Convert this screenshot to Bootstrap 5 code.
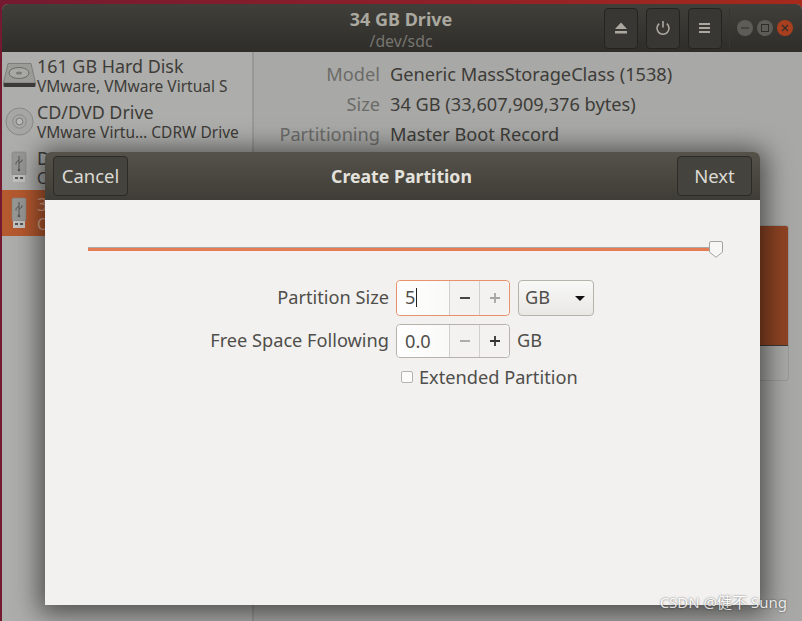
<!DOCTYPE html>
<html lang="en">
<head>
  <meta charset="UTF-8">
  <meta name="viewport" content="width=device-width, initial-scale=1.0">
  <title>Create Partition</title>
  <link rel="stylesheet" href="https://cdn.jsdelivr.net/npm/bootstrap@5.3.0/dist/css/bootstrap.min.css">
  <style>
    html, body { height: 100%; overflow: hidden; }
    body { font-family: "Noto Sans", "Noto Sans CJK SC", sans-serif; font-size: 18.2px; background: linear-gradient(90deg, #741a30 0%, #8c1f2a 50%, #a62a1c 100%); color: #3d3c38; }
    .desk { height: 621px; padding: 4px 0 0 2px; position: relative; }
    .app-win { height: 617px; border-radius: 6px 6px 0 0; overflow: hidden; display: flex; flex-direction: column; background: #a9a9a7; }
    .app-head { height: 48px; flex: none; background: linear-gradient(#413f3a, #2e2d29); display: flex; align-items: center; position: relative; padding-right: 9px; justify-content: flex-end; }
    .app-title { position: absolute; left: 0; right: 2px; top: 5px; text-align: center; line-height: 1.15; }
    .app-title b { display: block; font-size: 18px; font-weight: 700; color: #aaa89f; }
    .app-title span { font-size: 15.8px; color: #77756f; }
    .tool-btn { width: 34px; height: 41px; border: 1px solid #24231f; border-radius: 4px; background: #383733; display: flex; align-items: center; justify-content: center; margin-right: 8px; }
    .sep-v { width: 1px; height: 40px; background: #38372f; margin: 0 3px 0 -1px; }
    .wm-dot { width: 16px; height: 16px; border-radius: 50%; background: #5d5c57; margin-left: 4px; display: flex; align-items: center; justify-content: center; }
    .wm-dot.closer { background: #a8401f; }
    .app-body { flex: 1; display: flex; min-height: 0; }
    .side { width: 252px; flex: none; background: #adadab; border-right: 2px solid #989896; }
    .drive { height: 46px; display: flex; align-items: center; padding-left: 1px; gap: 1px; white-space: nowrap; overflow: hidden; }
    .drive.on { background: #b5592f; color: #d9a689; }
    .drive-ico { width: 33px; flex: none; display: flex; justify-content: center; }
    .drive-name { font-size: 17.9px; line-height: 22px; }
    .drive-sub { font-size: 15.5px; line-height: 19px; }
    .info { flex: 1; padding-top: 8px; position: relative; background: #a8a8a6; }
    .info-row { display: flex; height: 30px; align-items: center; white-space: nowrap; }
    .info-key { width: 126px; text-align: right; color: #6b6b68; margin-right: 10px; }
    .usage { position: absolute; left: 400px; top: 173px; height: 156px; right: 13px; border: 1px solid #989896; border-radius: 3px; overflow: hidden; }
    .usage div { height: 120px; background: #8f4423; border-bottom: 1px solid #3a3936; }
    .dlg { position: absolute; left: 45px; top: 152px; width: 715px; height: 453px; border-radius: 6px 6px 0 0; box-shadow: 0 3px 26px 6px rgba(0,0,0,.55); display: flex; flex-direction: column; }
    .dlg-head { height: 48px; flex: none; background: linear-gradient(#55524a, #3f3d37); border-radius: 6px 6px 0 0; display: flex; align-items: center; justify-content: space-between; padding: 0 8px; position: relative; }
    .dlg-head b { position: absolute; left: 0; right: 2px; text-align: center; font-size: 17.7px; color: #e4e2dc; }
    .dlg-btn { width: 75px; height: 40px; border: 1px solid #2c2b27; border-radius: 4px; background: #45433d; color: #dcdad4; font-size: 18.5px; display: flex; align-items: center; justify-content: center; }
    .dlg-body { flex: 1; background: #f2f1ef; padding-top: 40px; }
    .slide { margin: 0 37px 0 43px; height: 20px; position: relative; }
    .slide-fill { position: absolute; left: 0; right: 4px; top: 8px; height: 3px; background: #e57c52; box-shadow: 0 -1px 0 #a9a8a4; }
    .slide-knob { position: absolute; right: 0; top: 1px; }
    .part-form { display: grid; grid-template-columns: 344px auto 1fr; column-gap: 7px; row-gap: 8px; margin-top: 20px; align-items: center; color: #4f4e4a; }
    .part-form > label { text-align: right; margin: 0; }
    .spin { width: 114px; height: 36px; border: 1px solid #b6b3ac; border-radius: 4px; display: flex; background: #fff; }
    .spin.short-spin { height: 34px; }
    .spin.act { border-color: #e8926d; }
    .spin-val { flex: 1; padding-left: 8px; line-height: 32px; background: linear-gradient(90deg, #fff, #f9f9f8); border-radius: 4px 0 0 4px; }
    .spin-val i { display: inline-block; width: 1px; height: 19px; background: #222; vertical-align: -3px; margin-left: 1px; }
    .spin-b { width: 30px; border-left: 1px solid #d2d0ca; background: #f3f2f0; display: flex; align-items: center; justify-content: center; font-size: 0; }
    .dim-sign { opacity: .4; }
    .gb-sel { width: 76px; height: 36px; border: 1px solid #b6b3ac; border-radius: 4px; background: linear-gradient(#f8f8f7, #e9e8e5); display: flex; align-items: center; justify-content: space-between; padding: 0 8px 0 6px; margin-left: 1px; }
    .gb-arrow { width: 0; height: 0; border-left: 5px solid transparent; border-right: 5px solid transparent; border-top: 5px solid #111; }
    .ext-row { grid-column: 2 / 4; display: flex; align-items: center; gap: 6px; padding-left: 5px; line-height: 22px; }
    .ext-box { width: 12px; height: 12px; border: 1px solid #b6b3ac; border-radius: 2px; background: #fbfbfa; }
    .mark-text { position: absolute; right: 15px; top: 592px; font-size: 15px; line-height: 20px; color: #fff; opacity: .8; text-shadow: 0 0 2px rgba(0,0,0,.75); white-space: nowrap; }
  </style>
</head>
<body>
  <div class="desk">
    <div class="app-win">
      <div class="app-head">
        <div class="app-title"><b>34 GB Drive</b><span>/dev/sdc</span></div>
        <div class="tool-btn">
          <svg width="14" height="14" viewBox="0 0 14 14"><path d="M7 1.5 13 8H1z M1 10h12v2.500H1z" fill="#aaa89f"/></svg>
        </div>
        <div class="tool-btn">
          <svg width="16" height="16" viewBox="0 0 16 16" fill="none" stroke="#aaa89f" stroke-width="1.6"><path d="M8 1v6.5"/><path d="M4.2 3.6a6 6 0 1 0 7.6 0"/></svg>
        </div>
        <div class="tool-btn">
          <svg width="12" height="12" viewBox="0 0 12 12" fill="#aaa89f"><rect y="1" width="11" height="2"/><rect y="5" width="11" height="2"/><rect y="9" width="11" height="2"/></svg>
        </div>
        <div class="sep-v"></div>
        <div class="wm-dot"><svg width="10" height="10" viewBox="0 0 10 10"><path d="M1 5h8" stroke="#2e2d29"/></svg></div>
        <div class="wm-dot"><svg width="10" height="10" viewBox="0 0 10 10"><rect x="1.5" y="1.5" width="7" height="7" fill="none" stroke="#2e2d29"/></svg></div>
        <div class="wm-dot closer"><svg width="10" height="10" viewBox="0 0 10 10"><path d="M2 2l6 6M8 2l-6 6" stroke="#2e2d29" stroke-width="1.2"/></svg></div>
      </div>
      <div class="app-body">
        <div class="side">
          <div class="drive">
            <div class="drive-ico">
              <svg width="33" height="24" viewBox="0 0 33 24"><path d="M5 .5h23l4.500 19.500H.5z" fill="#9b9b98" stroke="#6d6d6a" stroke-width=".7"/><ellipse cx="16" cy="10" rx="10" ry="5.500" fill="#a8a8a5" stroke="#6b6b68"/><ellipse cx="16" cy="10" rx="3" ry="1.600" fill="#7a7a77"/><path d="M.5 20h32v3a1 1 0 0 1-1 1h-30a1 1 0 0 1-1-1z" fill="#3b3a38"/></svg>
            </div>
            <div><div class="drive-name">161 GB Hard Disk</div><div class="drive-sub">VMware, VMware Virtual S</div></div>
          </div>
          <div class="drive">
            <div class="drive-ico">
              <svg width="29" height="29" viewBox="0 0 30 30"><circle cx="15" cy="15" r="14" fill="#a6a6a4" stroke="#878785"/><circle cx="15" cy="15" r="7" fill="none" stroke="#8a8a88"/><circle cx="15" cy="15" r="3.500" fill="#b9b9b7" stroke="#757573"/></svg>
            </div>
            <div><div class="drive-name">CD/DVD Drive</div><div class="drive-sub">VMware Virtu… CDRW Drive</div></div>
          </div>
          <div class="drive">
            <div class="drive-ico">
              <svg width="18" height="32" viewBox="0 0 18 32"><rect x="1" y="1" width="14" height="23" rx="1.500" fill="#979795" stroke="#807f7d" stroke-width=".6"/><rect x="2" y="24" width="12" height="7" fill="#c2c2c0"/><rect x="4" y="26" width="3" height="2" fill="#555"/><rect x="9" y="26" width="3" height="2" fill="#555"/><path d="M8 5v14M8 9 5 11.500v2M8 12l3-2V8.500" fill="none" stroke="#555" stroke-width="1"/><circle cx="8" cy="19" r="1.300" fill="#555"/></svg>
            </div>
            <div><div class="drive-name">D</div><div class="drive-sub">C</div></div>
          </div>
          <div class="drive on">
            <div class="drive-ico">
              <svg width="18" height="32" viewBox="0 0 18 32"><rect x="1" y="1" width="14" height="23" rx="1.500" fill="#979795" stroke="#807f7d" stroke-width=".6"/><rect x="2" y="24" width="12" height="7" fill="#c2c2c0"/><rect x="4" y="26" width="3" height="2" fill="#555"/><rect x="9" y="26" width="3" height="2" fill="#555"/><path d="M8 5v14M8 9 5 11.500v2M8 12l3-2V8.500" fill="none" stroke="#555" stroke-width="1"/><circle cx="8" cy="19" r="1.300" fill="#555"/></svg>
            </div>
            <div><div class="drive-name">3</div><div class="drive-sub">C</div></div>
          </div>
        </div>
        <div class="info">
          <div class="info-row"><div class="info-key">Model</div><div>Generic MassStorageClass (1538)</div></div>
          <div class="info-row"><div class="info-key">Size</div><div>34 GB (33,607,909,376 bytes)</div></div>
          <div class="info-row"><div class="info-key">Partitioning</div><div>Master Boot Record</div></div>
          <div class="usage"><div></div></div>
        </div>
      </div>
    </div>

    <div class="dlg">
      <div class="dlg-head">
        <b>Create Partition</b>
        <div class="dlg-btn">Cancel</div>
        <div class="dlg-btn">Next</div>
      </div>
      <div class="dlg-body">
        <div class="slide">
          <div class="slide-fill"></div>
          <svg class="slide-knob" width="14" height="17" viewBox="0 0 14 17"><path d="M2 .5h10a1.500 1.500 0 0 1 1.500 1.500v9L7 16.300.5 11V2A1.500 1.500 0 0 1 2 .5z" fill="#f6f6f5" stroke="#a5a39e"/></svg>
        </div>
        <div class="part-form">
          <label>Partition Size</label>
          <div class="spin act">
            <div class="spin-val">5<i></i></div>
            <div class="spin-b"><svg width="12" height="12" viewBox="0 0 12 12"><path d="M1 6h10" stroke="#333" stroke-width="1.800"/></svg></div>
            <div class="spin-b rounded-end"><svg class="dim-sign" width="12" height="12" viewBox="0 0 12 12"><path d="M1 6h10M6 1v10" stroke="#333" stroke-width="1.800"/></svg></div>
          </div>
          <div class="gb-sel">GB<span class="gb-arrow"></span></div>
          <label>Free Space Following</label>
          <div class="spin short-spin">
            <div class="spin-val">0.0</div>
            <div class="spin-b"><svg class="dim-sign" width="12" height="12" viewBox="0 0 12 12"><path d="M1 6h10" stroke="#333" stroke-width="1.800"/></svg></div>
            <div class="spin-b rounded-end"><svg width="12" height="12" viewBox="0 0 12 12"><path d="M1 6h10M6 1v10" stroke="#333" stroke-width="1.800"/></svg></div>
          </div>
          <div>GB</div>
          <div class="ext-row"><span class="ext-box"></span>Extended Partition</div>
        </div>
      </div>
    </div>
    <div class="mark-text">CSDN @健不 Sung</div>
  </div>
  <script src="https://cdn.jsdelivr.net/npm/bootstrap@5.3.0/dist/js/bootstrap.bundle.min.js"></script>
</body>
</html>
